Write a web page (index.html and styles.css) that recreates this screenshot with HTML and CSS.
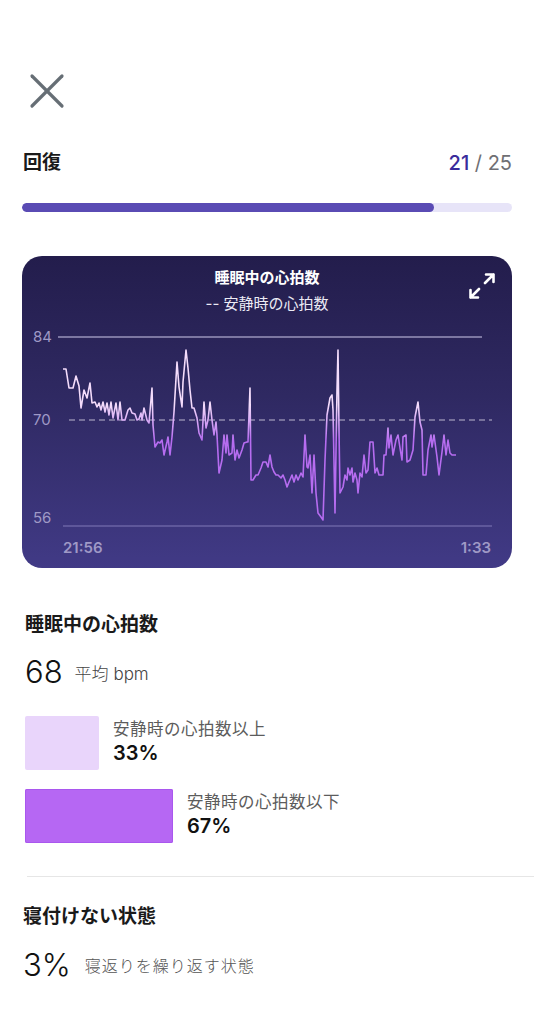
FILE: index.html
```html
<!DOCTYPE html>
<html lang="ja">
<head>
    <meta charset="UTF-8">
    <meta name="viewport" content="width=device-width, initial-scale=1.0">
    <title>回復</title>
    <link rel="stylesheet" href="styles.css">
</head>
<body>
    <div class="page">
        <!-- Close button -->
        <button class="close-btn" aria-label="閉じる">
            <svg width="40" height="40" viewBox="0 0 40 40">
                <line x1="5" y1="4" x2="35" y2="34" />
                <line x1="35" y1="4" x2="5" y2="34" />
            </svg>
        </button>

        <!-- Score header -->
        <div class="score-row">
            <h1>回復</h1>
            <p class="score"><span class="score-value">21</span> / 25</p>
        </div>
        <div class="progress">
            <div class="progress-fill" style="width: 84%"></div>
        </div>

        <!-- Chart card -->
        <div class="chart-card">
            <div class="chart-head">
                <p class="chart-title">睡眠中の心拍数</p>
                <p class="chart-sub">-- 安静時の心拍数</p>
            </div>
            <button class="expand-btn" aria-label="拡大">
                <svg width="26" height="26" viewBox="0 0 26 26">
                    <path d="M17 1.5h7.5v7.5M24.5 1.5L16 10" />
                    <path d="M1.5 17v7.5H9M1.5 24.5L10 16" />
                </svg>
            </button>
            <svg class="chart" viewBox="22 314 490 254" width="490" height="254">
                <defs>
                    <linearGradient id="lineGrad" gradientUnits="userSpaceOnUse" x1="0" y1="405" x2="0" y2="440">
                        <stop offset="0" stop-color="#f4dcfb" />
                        <stop offset="1" stop-color="#b66cf0" />
                    </linearGradient>
                </defs>
                <line class="grid-top" x1="58" y1="337" x2="482" y2="337" />
                <line class="grid-rest" x1="69" y1="420" x2="492" y2="420" />
                <line class="grid-bottom" x1="63" y1="526" x2="492" y2="526" />
                <text class="axis" x="33" y="342">84</text>
                <text class="axis" x="33" y="425">70</text>
                <text class="axis" x="33" y="523">56</text>
                <text class="axis time" x="63" y="553">21:56</text>
                <text class="axis time" x="491" y="553" text-anchor="end">1:33</text>
                <polyline class="hr-line" points="63,369 66,369 69,388 73,388 76,376 79,386 81,408 84,390 87,398 90,383 92,403 95,402 97,407 99,403 101,410 103,402 105,412 107,403 109,415 111,402 113,418 116,403 118,420 120,402 122,420 125,420 128,410 130,408 132,413 135,414 137,420 139,419 141,413 142,420 144,408 147,420 149,423 152,388 153,425 155,447 158,442 160,443 162,440 164,455 167,442 168,437 170,455 172,437 174,412 177,362 179,387 182,407 183,382 186,350 188,368 190,390 192,408 194,408 197,418 199,433 202,440 204,402 206,428 208,420 210,402 212,420 214,435 216,422 217,435 219,473 222,460 224,435 226,453 227,435 229,455 232,453 233,435 235,460 237,450 239,458 242,450 244,443 247,442 248,442 250,388 251,480 253,480 256,475 258,475 261,468 263,462 266,462 268,467 270,455 272,467 274,472 276,475 278,475 281,478 283,475 285,480 287,487 289,482 292,475 294,482 296,475 298,480 301,473 303,477 305,435 307,467 308,468 310,455 312,493 314,455 316,493 318,513 321,517 323,520 325,460 327,415 330,398 332,395 333,410 335,513 337,390 338,350 339,430 340,493 343,487 345,475 347,480 348,468 350,475 352,468 353,482 355,473 357,480 358,493 360,473 362,477 364,455 366,473 368,470 370,442 373,442 375,473 377,468 379,475 383,475 384,455 386,455 388,428 389,448 391,435 393,455 396,440 398,435 400,448 402,460 403,437 406,435 407,462 410,460 413,450 415,417 418,402 420,422 422,430 423,475 426,475 428,450 431,435 432,447 434,435 437,457 439,475 442,452 444,435 446,455 448,440 450,453 452,455 456,455" />
            </svg>
        </div>

        <!-- Sleeping heart rate -->
        <section class="stats">
            <h2>睡眠中の心拍数</h2>
            <p class="big-stat"><span class="big-num">68</span> <span class="big-unit">平均 bpm</span></p>

            <div class="split-row first">
                <div class="swatch swatch-above" style="width: 74px"></div>
                <div class="split-text">
                    <p class="split-label">安静時の心拍数以上</p>
                    <p class="split-value">33%</p>
                </div>
            </div>
            <div class="split-row">
                <div class="swatch swatch-below" style="width: 148px"></div>
                <div class="split-text">
                    <p class="split-label">安静時の心拍数以下</p>
                    <p class="split-value">67%</p>
                </div>
            </div>
        </section>

        <hr class="divider">

        <!-- Restlessness -->
        <section class="restless">
            <h2>寝付けない状態</h2>
            <p class="big-stat"><span class="big-num">3%</span> <span class="big-unit small">寝返りを繰り返す状態</span></p>
        </section>

        <hr class="divider">
    </div>
</body>
</html>
```

FILE: styles.css
```css
/* General Styles */
body {
    font-family: Inter, "Noto Sans CJK JP", sans-serif;
    margin: 0;
    padding: 0;
    background-color: #fff;
    color: #1a1a1a;
    overflow-x: hidden;
}

p, h1, h2 {
    margin: 0;
}

button {
    background: none;
    border: none;
    padding: 0;
    cursor: pointer;
}

.page {
    padding: 0 22px;
}

/* Close button */
.close-btn {
    display: block;
    margin: 72px 0 0 5px;
    width: 40px;
    height: 40px;
}

.close-btn svg {
    display: block;
}

.close-btn line {
    stroke: #666e75;
    stroke-width: 3.2;
    stroke-linecap: round;
}

/* Score header */
.score-row {
    display: flex;
    justify-content: space-between;
    align-items: center;
    margin-top: 39px;
    padding-left: 1px;
    height: 24px;
}

.score-row h1 {
    font-size: 19px;
    font-weight: 700;
    line-height: 24px;
}

.score {
    font-size: 20px;
    color: #6f6f74;
    line-height: 24px;
}

.score-value {
    color: #3a2c9c;
    font-weight: 500;
}

.progress {
    margin-top: 28px;
    height: 9px;
    border-radius: 5px;
    background-color: #e7e4f8;
    overflow: hidden;
}

.progress-fill {
    height: 100%;
    border-radius: 5px;
    background-color: #5a4bb4;
}

/* Chart card */
.chart-card {
    position: relative;
    margin-top: 44px;
    height: 312px;
    border-radius: 20px;
    background: linear-gradient(180deg, #231d4c 0%, #2f2962 45%, #413a86 100%);
    overflow: hidden;
}

.chart-head {
    padding-top: 12px;
    text-align: center;
    color: #fff;
}

.chart-title {
    font-size: 15px;
    font-weight: 700;
    line-height: 20px;
}

.chart-sub {
    margin-top: 6px;
    font-size: 15px;
    line-height: 20px;
    color: #ecebf5;
}

.expand-btn {
    position: absolute;
    top: 17px;
    right: 17px;
    width: 26px;
    height: 26px;
}

.expand-btn svg {
    display: block;
}

.expand-btn path {
    fill: none;
    stroke: #fff;
    stroke-width: 2.6;
    stroke-linecap: round;
    stroke-linejoin: round;
}

.chart {
    display: block;
}

.grid-top {
    stroke: #cfcaeb;
    stroke-width: 1;
}

.grid-rest {
    stroke: #8e89ad;
    stroke-width: 1.4;
    stroke-dasharray: 6 4;
}

.grid-bottom {
    stroke: #8079b8;
    stroke-width: 1;
}

.axis {
    font-family: Inter, sans-serif;
    font-size: 15px;
    fill: #9f99c6;
}

.axis.time {
    font-weight: 600;
}

.hr-line {
    fill: none;
    stroke: url(#lineGrad);
    stroke-width: 1.6;
    stroke-linejoin: round;
}

/* Stats */
.stats {
    padding-left: 3px;
    margin-top: 45px;
}

.stats h2,
.restless h2 {
    font-size: 19px;
    font-weight: 700;
    line-height: 24px;
}

.big-stat {
    display: flex;
    align-items: center;
    gap: 12px;
    margin-top: 17px;
    height: 36px;
}

.big-num {
    font-size: 31px;
    font-weight: 300;
    color: #111;
    line-height: 36px;
}

.big-unit {
    font-size: 17px;
    font-weight: 300;
    color: #444;
}

.big-unit.small {
    font-size: 16px;
    letter-spacing: 1px;
    color: #555;
    margin-left: 2px;
}

.split-row {
    display: flex;
    align-items: flex-start;
    gap: 14px;
    margin-top: 19px;
}

.split-row.first {
    margin-top: 26px;
}

.swatch {
    height: 54px;
    border-radius: 2px;
    flex-shrink: 0;
}

.swatch-above {
    background-color: #e9d5fb;
}

.swatch-below {
    background-color: #b667f3;
    box-shadow: inset 0 0 0 1px #a957ee;
}

.split-text {
    padding-top: 1px;
}

.split-label {
    font-size: 16.5px;
    line-height: 24px;
    color: #5c5c5c;
    letter-spacing: 0.5px;
}

.split-value {
    font-size: 20px;
    font-weight: 600;
    line-height: 24px;
    color: #111;
}

/* Divider */
.divider {
    border: none;
    border-top: 1px solid #e6e6e6;
    margin: 33px -22px 0 5px;
}

.restless {
    margin-top: 28px;
    padding-left: 1px;
}

.restless .big-stat {
    margin-top: 18px;
}

.restless + .divider {
    margin-top: 41px;
}
```
